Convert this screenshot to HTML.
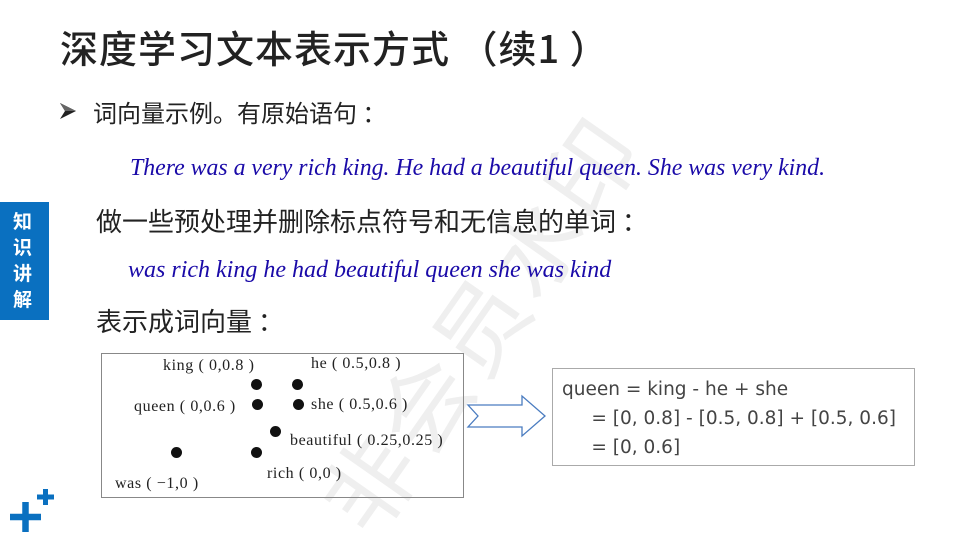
<!DOCTYPE html>
<html><head><meta charset="utf-8"><style>
body{margin:0;width:960px;height:540px;overflow:hidden;background:#fff;position:relative;font-family:"Liberation Sans","Noto Sans CJK SC",sans-serif}
.a{position:absolute;white-space:nowrap}
.cn{font-family:"Noto Sans CJK SC","WenQuanYi Zen Hei",sans-serif;color:#222}
.it{font-family:"Liberation Serif",serif;font-style:italic;color:#1a0aa8}
.sr{font-family:"Liberation Serif",serif;color:#222;font-size:16px;letter-spacing:0.6px}
.d{position:absolute;width:11px;height:11px;border-radius:50%;background:#111}
</style></head><body>
<div class="a cn" style="font-size:92px;color:#efefef;transform:rotate(-55deg);transform-origin:left top;top:480px;left:285px;letter-spacing:4px">非会员水印</div>
<div class="a cn" style="left:60px;top:20px;font-size:38px;font-weight:500;line-height:54px;letter-spacing:1px">深度学习文本表示方式 （续1 ）</div>
<svg class="a" style="left:58px;top:101px" width="20" height="20" viewBox="0 0 20 20"><path d="M2 2 L18 10 L2 18 L7 10 Z" fill="#222"/><path d="M2 2 L18 10 L7 10Z" fill="#666"/></svg>
<div class="a cn" style="left:93px;top:95px;font-size:24px;line-height:34px">词向量示例。有原始语句 ：</div>
<div class="a it" style="left:130px;top:153px;font-size:23.8px;line-height:30px">There was a very rich king. He had a beautiful queen. She was very kind.</div>
<div class="a" style="left:0;top:202px;width:49px;height:118px;background:#0a70c0"></div>
<div class="a cn" style="left:13px;top:208px;width:24px;font-size:19px;line-height:26px;color:#fff;font-weight:bold;white-space:normal">知识讲解</div>
<div class="a cn" style="left:96px;top:203px;font-size:26px;line-height:36px">做一些预处理并删除标点符号和无信息的单词 ：</div>
<div class="a it" style="left:128px;top:255px;font-size:24px;line-height:30px">was rich king he had beautiful queen she was kind</div>
<div class="a cn" style="left:96px;top:303px;font-size:26px;line-height:36px">表示成词向量 ：</div>
<div class="a" style="left:101px;top:353px;width:361px;height:143px;border:1px solid #888"></div>
<div class="a sr" style="left:163px;top:357px">king ( 0,0.8 )</div>
<div class="a sr" style="left:311px;top:355px">he ( 0.5,0.8 )</div>
<div class="a sr" style="left:134px;top:398px">queen ( 0,0.6 )</div>
<div class="a sr" style="left:311px;top:396px">she ( 0.5,0.6 )</div>
<div class="a sr" style="left:290px;top:432px">beautiful ( 0.25,0.25 )</div>
<div class="a sr" style="left:267px;top:465px">rich ( 0,0 )</div>
<div class="a sr" style="left:115px;top:475px">was ( −1,0 )</div>
<div class="d" style="left:251px;top:379px"></div>
<div class="d" style="left:292px;top:379px"></div>
<div class="d" style="left:252px;top:399px"></div>
<div class="d" style="left:293px;top:399px"></div>
<div class="d" style="left:270px;top:426px"></div>
<div class="d" style="left:171px;top:447px"></div>
<div class="d" style="left:251px;top:447px"></div>
<svg class="a" style="left:466px;top:394px" width="82" height="44"><path d="M2 11 H56 V2 L79 22 L56 42 V33 H2 L12 22 Z" fill="#fff" stroke="#4a7cc0" stroke-width="1.3"/></svg>
<div class="a" style="left:552px;top:368px;width:361px;height:96px;border:1px solid #aaa"></div>
<div class="a" style="left:562px;top:375px;line-height:29px;color:#444;font-family:'DejaVu Sans','Liberation Sans',sans-serif;font-size:18.5px">queen = king - he + she<br>&nbsp;&nbsp;&nbsp;&nbsp;&nbsp;= [0, 0.8] - [0.5, 0.8] + [0.5, 0.6]<br>&nbsp;&nbsp;&nbsp;&nbsp;&nbsp;= [0, 0.6]</div>
<svg class="a" style="left:8px;top:486px" width="50" height="50"><path d="M2 31 H33 M17.5 16 V46" stroke="#0a70c0" stroke-width="6.5"/><path d="M29 11 H46 M37.5 3 V19" stroke="#0a70c0" stroke-width="5"/></svg>
</body></html>
